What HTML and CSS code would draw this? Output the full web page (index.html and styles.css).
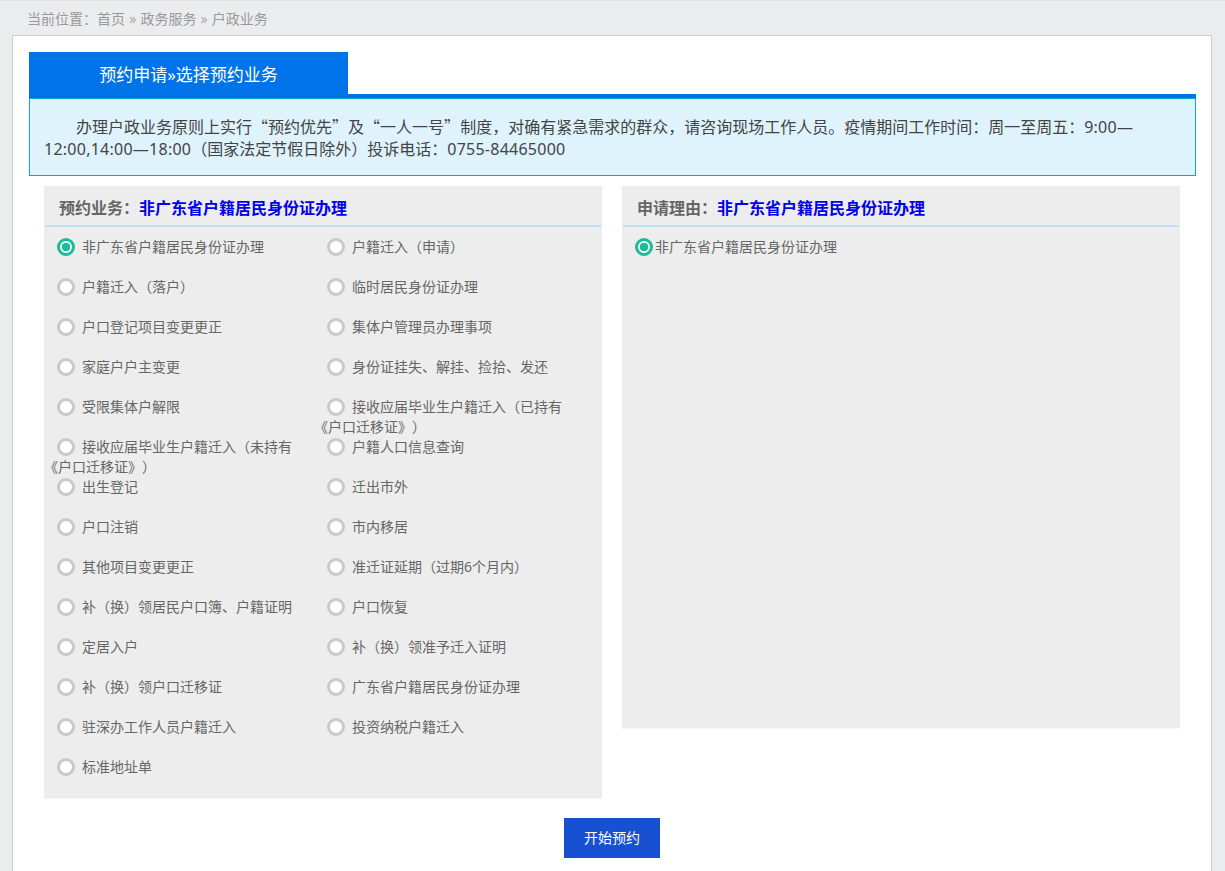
FILE: index.html
```html
<!DOCTYPE html>
<html lang="zh-CN">
<head>
<meta charset="utf-8">
<title>户政业务</title>
<link rel="stylesheet" href="styles.css">
</head>
<body>
<div class="crumbs">当前位置：首页 <span class="sep">»</span> 政务服务 <span class="sep">»</span> 户政业务</div>
<main class="card">
  <div class="tabbar"><div class="tab">预约申请»选择预约业务</div></div>
  <div class="notice">办理户政业务原则上实行<span class="q">“</span>预约优先<span class="q">”</span>及<span class="q">“</span>一人一号<span class="q">”</span>制度，对确有紧急需求的群众，请咨询现场工作人员。疫情期间工作时间：周一至周五：<span class="num">9:00—</span><br><span class="num">12:00,14:00—18:00</span>（国家法定节假日除外）投诉电话：<span class="num">0755-84465000</span></div>
  <div class="columns">
    <section class="panel panel-left">
      <h2 class="panel-title">预约业务：<span class="picked">非广东省户籍居民身份证办理</span></h2>
      <div class="options">
        <label class="option"><input type="radio" name="biz" checked><span class="label-text">非广东省户籍居民身份证办理</span></label>
        <label class="option"><input type="radio" name="biz"><span class="label-text">户籍迁入（申请）</span></label>
        <label class="option"><input type="radio" name="biz"><span class="label-text">户籍迁入（落户）</span></label>
        <label class="option"><input type="radio" name="biz"><span class="label-text">临时居民身份证办理</span></label>
        <label class="option"><input type="radio" name="biz"><span class="label-text">户口登记项目变更更正</span></label>
        <label class="option"><input type="radio" name="biz"><span class="label-text">集体户管理员办理事项</span></label>
        <label class="option"><input type="radio" name="biz"><span class="label-text">家庭户户主变更</span></label>
        <label class="option"><input type="radio" name="biz"><span class="label-text">身份证挂失、解挂、捡拾、发还</span></label>
        <label class="option"><input type="radio" name="biz"><span class="label-text">受限集体户解限</span></label>
        <label class="option"><input type="radio" name="biz"><span class="label-text">接收应届毕业生户籍迁入（已持有<br><span class="book">《</span>户口迁移证》）</span></label>
        <label class="option"><input type="radio" name="biz"><span class="label-text">接收应届毕业生户籍迁入（未持有<br><span class="book">《</span>户口迁移证》）</span></label>
        <label class="option"><input type="radio" name="biz"><span class="label-text">户籍人口信息查询</span></label>
        <label class="option"><input type="radio" name="biz"><span class="label-text">出生登记</span></label>
        <label class="option"><input type="radio" name="biz"><span class="label-text">迁出市外</span></label>
        <label class="option"><input type="radio" name="biz"><span class="label-text">户口注销</span></label>
        <label class="option"><input type="radio" name="biz"><span class="label-text">市内移居</span></label>
        <label class="option"><input type="radio" name="biz"><span class="label-text">其他项目变更更正</span></label>
        <label class="option"><input type="radio" name="biz"><span class="label-text">准迁证延期（过期6个月内）</span></label>
        <label class="option"><input type="radio" name="biz"><span class="label-text">补（换）领居民户口簿、户籍证明</span></label>
        <label class="option"><input type="radio" name="biz"><span class="label-text">户口恢复</span></label>
        <label class="option"><input type="radio" name="biz"><span class="label-text">定居入户</span></label>
        <label class="option"><input type="radio" name="biz"><span class="label-text">补（换）领准予迁入证明</span></label>
        <label class="option"><input type="radio" name="biz"><span class="label-text">补（换）领户口迁移证</span></label>
        <label class="option"><input type="radio" name="biz"><span class="label-text">广东省户籍居民身份证办理</span></label>
        <label class="option"><input type="radio" name="biz"><span class="label-text">驻深办工作人员户籍迁入</span></label>
        <label class="option"><input type="radio" name="biz"><span class="label-text">投资纳税户籍迁入</span></label>
        <label class="option"><input type="radio" name="biz"><span class="label-text">标准地址单</span></label>
      </div>
    </section>
    <section class="panel panel-right">
      <h2 class="panel-title">申请理由：<span class="picked">非广东省户籍居民身份证办理</span></h2>
      <div class="reasons">
        <label class="reason"><input type="radio" name="reason" checked><span>非广东省户籍居民身份证办理</span></label>
      </div>
    </section>
  </div>
  <div class="actions"><button class="start" type="button">开始预约</button></div>
</main>
</body>
</html>
```
FILE: styles.css
```css
* { box-sizing: border-box; }
html, body { margin: 0; padding: 0; height: 871px; overflow: hidden; }
body {
  background: #ebecee;
  border-top: 1px solid #e0e0e0;
  font-family: "Noto Sans", "Noto Sans CJK SC", sans-serif;
  color: #666;
  text-spacing-trim: space-all;
}
.crumbs {
  height: 34px;
  padding: 9px 0 0 27px;
  font-size: 14px;
  line-height: 18px;
  color: #999;
}
.sep { color: #aaa; margin: 0 0.5px; }
.card {
  margin: 0 13px 0 12px;
  height: 900px;
  background: #fff;
  border: 1px solid #ccc;
  padding: 16px 15px 0 16px;
}
.tabbar {
  border-bottom: 4px solid #0073e9;
}
.tab {
  width: 319px;
  height: 42px;
  background: #0073e9;
  color: #fff;
  font-size: 17px;
  line-height: 46px;
  text-align: center;
}
.notice {
  height: 78px;
  border: 1px solid #0aa6d6;
  background: #dff3fd;
  padding: 16px 14px 0;
  font-size: 16px;
  line-height: 22px;
  color: #444;
  text-indent: 32px;
}
.notice .num { letter-spacing: 0.25px; }
.q { font-family: "Noto Sans CJK SC", sans-serif; }
.columns {
  display: flex;
  align-items: flex-start;
  gap: 20px;
  margin: 10px 0 0 15px;
}
.panel {
  width: 558px;
  background: #ededed;
  border-bottom: 1px solid #f5f5f5;
}
.panel-left { height: 613px; }
.panel-right { height: 543px; }
.panel-title {
  margin: 0 1px;
  height: 41px;
  border-bottom: 2px solid #b9e3fb;
  padding-left: 14px;
  font-size: 16px;
  font-weight: bold;
  line-height: 44px;
  color: #666;
}
.picked { color: #0000ee; }
.options {
  display: flex;
  flex-wrap: wrap;
  padding-left: 5px;
}
.option {
  width: 270px;
  height: 40px;
  padding-top: 10px;
  text-indent: 8px;
  font-size: 14px;
  line-height: 20px;
}
.book { margin-left: -5px; }
input[type="radio"] {
  appearance: none;
  display: inline-block;
  width: 18px;
  height: 18px;
  margin: 0 7px 0 0;
  border: 3px solid #c9c9c9;
  border-radius: 50%;
  background: #fff;
  vertical-align: -4px;
}
input[type="radio"]:checked {
  border-color: #1abc9c;
  background: radial-gradient(circle, #1abc9c 0 4px, #fff 4.6px);
}
.reasons { padding: 10px 0 0 13px; }
.reason {
  display: block;
  font-size: 14px;
  line-height: 20px;
}
.reason input[type="radio"] { margin-right: 2px; }
.actions {
  display: flex;
  justify-content: center;
  padding-top: 19px;
  padding-right: 1px;
}
.start {
  width: 96px;
  height: 40px;
  border: 0;
  padding: 0 0 2px;
  background: #1850d2;
  color: #fff;
  font: 14px "Noto Sans", "Noto Sans CJK SC", sans-serif;
}
```
